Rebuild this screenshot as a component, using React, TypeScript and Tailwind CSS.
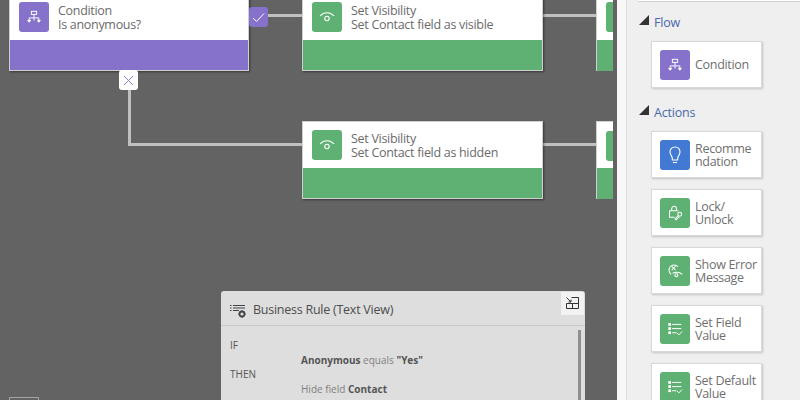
import React from "react";

const Flowchart = () => (
  <svg width="14" height="14" viewBox="0 0 16 16" fill="none" stroke="white" strokeWidth="1.100">
    <rect x="5" y="1.500" width="6" height="3.500" />
    <path d="M8 5v4M2.500 13V9h11v4M8 9v3" />
    <path d="M0.800 11.800h3.400L2.500 14zM11.800 11.800h3.400L13.500 14z" fill="white" />
  </svg>
);
const Eye = () => (
  <svg width="18" height="14" viewBox="0 0 18 14" fill="none" stroke="white" strokeWidth="1.100">
    <path d="M2 6C4 3.800 6.300 2.700 9 2.700s5 1.100 7 3.300" />
    <circle cx="9" cy="8.500" r="2.200" />
  </svg>
);
const Bulb = () => (
  <svg width="16" height="20" viewBox="0 0 16 20" fill="none" stroke="white" strokeWidth="1.100">
    <path d="M8 2C5 2 3 4.200 3 7c0 2.300 1.700 3.500 2.300 6v2h5.400v-2c.6-2.500 2.300-3.700 2.300-6 0-2.800-2-5-5-5z" />
    <path d="M6 17.500h4" />
  </svg>
);
const Lock = () => (
  <svg width="17" height="17" viewBox="0 0 20 20" fill="none" stroke="white" strokeWidth="1.200">
    <path d="M5.500 8V5.500a2.800 2.800 0 0 1 5.600 0V8" />
    <path d="M13.500 8H3v7.500h6" />
    <circle cx="15" cy="12" r="2.300" />
    <path d="M13.300 13.800l-3.800 3.800 1.200 1 3.700-3.500" />
  </svg>
);
const ErrorEye = () => (
  <svg width="17" height="17" viewBox="0 0 20 20" fill="none" stroke="white" strokeWidth="1.200">
    <path d="M5 14.500A6 6 0 1 1 12.800 5.500" />
    <path d="M5.500 5l4.500 4.500M10 5l-4.500 4.500" />
    <path d="M6.500 13.500C9 11.500 14 11 18 14.500" />
    <circle cx="11" cy="15.500" r="1.800" />
  </svg>
);
const ListCheck = () => (
  <svg width="15" height="14" viewBox="0 0 18 16" fill="none" stroke="white" strokeWidth="1.200">
    <rect x="1" y="1.500" width="2" height="2" fill="white" />
    <rect x="1" y="6.500" width="2" height="2" fill="white" />
    <rect x="1" y="11.500" width="2" height="2" fill="white" />
    <path d="M5 2.500h11M5 7.500h11M5 12.500h5M10.500 12.500l2.500 2.500 4-4" />
  </svg>
);

const IconBox = ({ color, children }: { color: string; children: React.ReactNode }) => (
  <div className={`w-[30px] h-[30px] shrink-0 rounded-[3px] flex items-center justify-center ${color}`}>{children}</div>
);

const Node = ({ pos, color, band, title, sub, icon }: { pos: string; color: string; band: string; title: string; sub: string; icon: React.ReactNode }) => (
  <div className={`absolute h-[78px] flex flex-col bg-white border border-[#d0d0d0] shadow-[1px_1px_2px_rgba(0,0,0,0.45)] ${pos}`}>
    <div className="h-[46px] flex items-center gap-[9px] pl-[9px] text-[#6b6b6b] text-[12.5px] leading-[14px] tracking-[-0.3px]">
      <IconBox color={color}>{icon}</IconBox>
      <div className="mt-[2px]">
        <div>{title}</div>
        <div>{sub}</div>
      </div>
    </div>
    <div className={`flex-1 ${band}`} />
  </div>
);

const Card = ({ color, icon, children }: { color: string; icon: React.ReactNode; children: React.ReactNode }) => (
  <div className="w-[111px] h-[47px] shrink-0 bg-white border border-[#d8d8d8] shadow-[1px_1px_2px_rgba(0,0,0,0.18)] flex items-center gap-[5px] pl-[8px] text-[#6f6f6f] text-[12.5px] leading-[13px] tracking-[-0.3px]">
    <IconBox color={color}>{icon}</IconBox>
    <div className="w-[66px]">{children}</div>
  </div>
);

const Section = ({ title }: { title: string }) => (
  <div className="flex items-center gap-[5px] h-[14px] text-[#4a68ab] text-[12.5px] tracking-[-0.2px]">
    <div className="w-0 h-0 -mt-[6px] border-l-[10px] border-l-transparent border-b-[10px] border-b-[#333333]" />
    <span>{title}</span>
  </div>
);

export default function App() {
  return (
    <div className="w-[800px] h-[400px] overflow-hidden flex bg-[#efefef]" style={{ fontFamily: '"Open Sans", "Noto Sans", sans-serif' }}>
      <div className="relative w-[617px] h-[400px] shrink-0 overflow-hidden bg-[#636363]">
        {/* connectors */}
        <div className="absolute left-[268px] top-[14px] w-[34px] h-[3px] bg-[#c0c0c0]" />
        <div className="absolute left-[543px] top-[14px] w-[53px] h-[3px] bg-[#c0c0c0]" />
        <div className="absolute left-[128px] top-[90px] w-[3px] h-[56px] bg-[#c0c0c0]" />
        <div className="absolute left-[128px] top-[143px] w-[174px] h-[3px] bg-[#c0c0c0]" />
        <div className="absolute left-[543px] top-[143px] w-[53px] h-[3px] bg-[#c0c0c0]" />

        <Node pos="left-[9px] -top-[7px] w-[240px]" color="bg-[#8672ca]" band="bg-[#8672ca]" title="Condition" sub="Is anonymous?" icon={<Flowchart />} />
        <Node pos="left-[302px] -top-[7px] w-[241px]" color="bg-[#5fb173]" band="bg-[#5fb173]" title="Set Visibility" sub="Set Contact field as visible" icon={<Eye />} />
        <Node pos="left-[302px] top-[121px] w-[241px]" color="bg-[#5fb173]" band="bg-[#5fb173]" title="Set Visibility" sub="Set Contact field as hidden" icon={<Eye />} />

        {/* next nodes, clipped */}
        <div className="absolute left-[596px] -top-[7px] w-[17px] h-[78px] overflow-hidden flex flex-col bg-white border-l border-[#d0d0d0]">
          <div className="h-[47px] pl-[9px] pt-[9px]"><div className="w-[30px] h-[30px] rounded-[3px] bg-[#5fb173]" /></div>
          <div className="flex-1 bg-[#5fb173]" />
        </div>
        <div className="absolute left-[596px] top-[121px] w-[17px] h-[78px] overflow-hidden flex flex-col bg-white border-l border-t border-[#d0d0d0]">
          <div className="h-[46px] pl-[9px] pt-[9px]"><div className="w-[30px] h-[30px] rounded-[3px] bg-[#5fb173]" /></div>
          <div className="flex-1 bg-[#5fb173]" />
        </div>

        {/* badges */}
        <div className="absolute left-[249px] top-[7px] w-[19px] h-[20px] rounded-[3px] bg-[#8672ca] flex items-center justify-center">
          <svg width="13" height="11" viewBox="0 0 13 11" fill="none" stroke="white" strokeWidth="1"><path d="M1 6l3.500 3.500L12 1.500" /></svg>
        </div>
        <div className="absolute left-[119px] top-[70px] w-[19px] h-[20px] rounded-[3px] bg-white flex items-center justify-center">
          <svg width="11" height="11" viewBox="0 0 11 11" fill="none" stroke="#8f7fd0" strokeWidth="1"><path d="M1 1l9 9M10 1l-9 9" /></svg>
        </div>

        {/* bottom-left minimap sliver */}
        <div className="absolute left-[9px] top-[397px] w-[30px] h-[6px] border border-[#a5a5a5]" />

        {/* text view */}
        <div className="absolute left-[221px] top-[291px] w-[364px] h-[120px] rounded-t-[3px] bg-[#dedede]">
          <div className="h-[35px] flex items-center gap-[6px] pl-[9px] pt-[5px] border-b border-[#c9c9c9] text-[#4d4d4d] text-[12.5px] tracking-[-0.25px]">
            <svg width="17" height="16" viewBox="0 0 17 16" fill="none" stroke="#444444" strokeWidth="1">
              <path d="M0 2.500h1.500M3 2.500h12M0 5h1.500M3 5h12M0 7.500h1.500M3 7.500h6" />
              <circle cx="12" cy="11" r="2.500" strokeWidth="1.800" />
              <path d="M12 7.200v1.200M12 13.600v1.200M8.200 11h1.200M14.600 11h1.200" strokeWidth="1.200" />
            </svg>
            <span>Business Rule (Text View)</span>
          </div>
          <div className="absolute right-[1px] top-[1px] w-[23px] h-[23px] bg-[#f2f2f2] flex items-center justify-center">
            <svg className="mb-[2px]" width="13" height="12" viewBox="0 0 13 12" fill="none" stroke="#333333" strokeWidth="1">
              <path d="M5.500.500H12.500V11.500H.500V6.500H12.500M6.500 6.500V11.500" />
              <path d="M.500.500L5 5M5 2.500V5H2.500" />
            </svg>
          </div>
          <div className="absolute left-[357px] top-[39px] w-[3px] h-[80px] bg-[#8f8f8f]" />
          <div className="pl-[9px] pt-[12px] text-[10px] leading-[14.7px] text-[#555555]">
            <div>IF</div>
            <div className="pl-[71px] text-[#808080]"><b className="text-[#555555]">Anonymous</b> equals <b className="text-[#555555]">"Yes"</b></div>
            <div>THEN</div>
            <div className="pl-[71px] text-[#808080]">Hide field <b className="text-[#555555]">Contact</b></div>
          </div>
        </div>
      </div>

      {/* right panel */}
      <div className="w-[10px] h-[400px] shrink-0 bg-[#f7f7f7] border-r border-[#dcdcdc]" />
      <div className="flex-1 h-[400px] relative pl-[11px]">
        <div className="h-[2px] bg-white border-b border-[#d0d0d0] -mr-[2px]" />
        <div className="pt-[14px] pl-[1px]"><Section title="Flow" /></div>
        <div className="pt-[11px] pl-[13px]">
          <Card color="bg-[#8672ca]" icon={<Flowchart />}>Condition</Card>
        </div>
        <div className="pt-[18px] pl-[1px]"><Section title="Actions" /></div>
        <div className="pt-[11px] pl-[13px] flex flex-col gap-[11px]">
          <Card color="bg-[#4179d3]" icon={<Bulb />}>Recomme<br />ndation</Card>
          <Card color="bg-[#5fb173]" icon={<Lock />}>Lock/<br />Unlock</Card>
          <Card color="bg-[#5fb173]" icon={<ErrorEye />}>Show Error<br />Message</Card>
          <Card color="bg-[#5fb173]" icon={<ListCheck />}>Set Field<br />Value</Card>
          <Card color="bg-[#5fb173]" icon={<ListCheck />}>Set Default<br />Value</Card>
        </div>
      </div>
    </div>
  );
}
